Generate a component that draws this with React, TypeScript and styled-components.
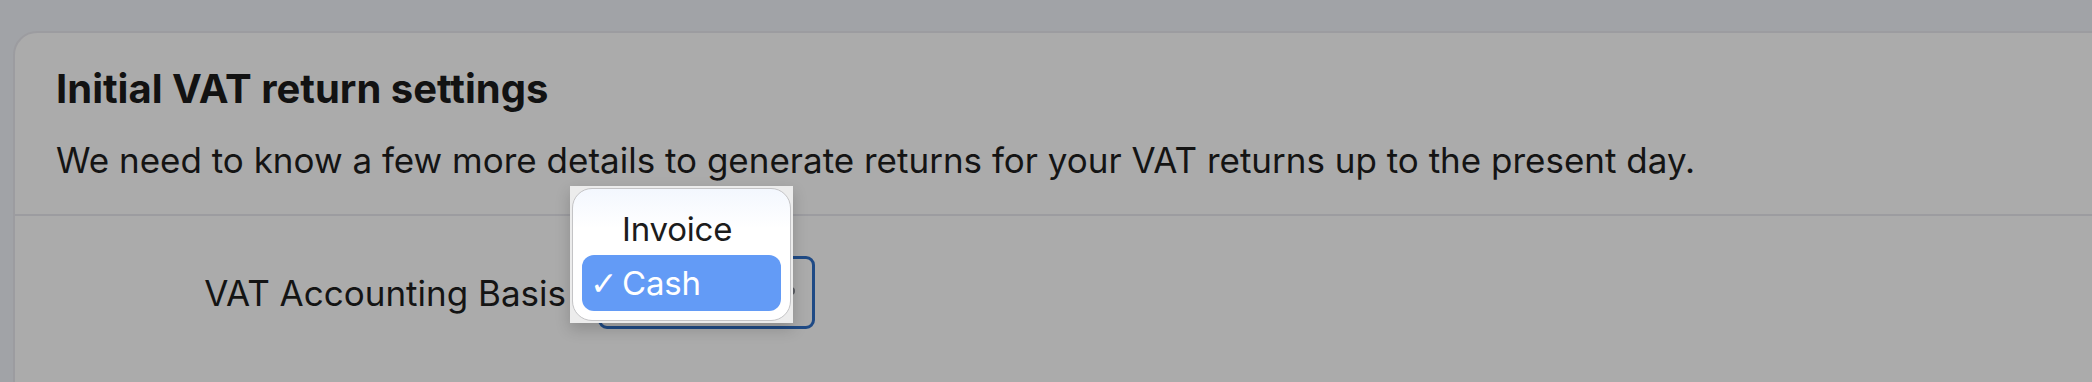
import React from "react";
import styled, { createGlobalStyle } from "styled-components";

const Global = createGlobalStyle`
  html, body { margin: 0; padding: 0; background: #a1a3a7; }
  body { font-family: Inter, "Noto Sans", sans-serif; color: #141414; }
`;

const Page = styled.div`
  height: 382px;
  overflow: hidden;
  padding: 31px 0 0 13px;
  box-sizing: border-box;
`;

const Card = styled.section`
  width: calc(100% + 40px);
  height: 420px;
  box-sizing: border-box;
  background: #ababab;
  border: 2px solid #9c9ca0;
  border-radius: 24px;
`;

const Header = styled.header`
  padding: 28px 0 0 41px;
  height: 183px;
  box-sizing: border-box;
  border-bottom: 2px solid #9c9ca0;
`;

const Title = styled.h2`
  margin: 0;
  font-size: 40px;
  line-height: 56px;
  font-weight: 700;
  color: #121212;
`;

const Subtitle = styled.p`
  margin: 21px 0 0;
  font-size: 35px;
  line-height: 44px;
  color: #141414;
`;

const Row = styled.div`
  display: grid;
  grid-template-columns: 551px 217px;
  column-gap: 32px;
  align-items: center;
  padding-top: 40px;
`;

const Label = styled.label`
  text-align: right;
  font-size: 35px;
  line-height: 44px;
`;

const SelectBox = styled.div`
  position: relative;
  height: 73px;
  box-sizing: border-box;
  border: 3px solid #1f4a85;
  border-radius: 9px;
`;

const Arrow = styled.span`
  position: absolute;
  right: 17px;
  top: 28px;
  width: 8px;
  height: 8px;
  border-radius: 50%;
  background: #5a5c62;
`;

const Backdrop = styled.div`
  position: absolute;
  left: -31px;
  top: -73px;
  width: 223px;
  height: 137px;
  background: #ececec;
  padding: 2px;
  box-sizing: border-box;
  box-shadow: 0 6px 14px rgba(0, 0, 0, 0.18);
`;

const Menu = styled.ul`
  margin: 0;
  padding: 0 9px 9px;
  list-style: none;
  height: 133px;
  box-sizing: border-box;
  background: linear-gradient(180deg, #f3f7fe 0%, #ffffff 30%, #ffffff 100%);
  border: 1px solid #c4c4c6;
  border-radius: 20px;
  display: flex;
  flex-direction: column;
  justify-content: flex-end;
  gap: 0;
`;

const Item = styled.li<{ $selected?: boolean }>`
  height: 56px;
  box-sizing: border-box;
  padding-top: ${(p) => (p.$selected ? "0" : "4px")};
  display: flex;
  align-items: center;
  border-radius: 12px;
  padding-left: 8px;
  font-size: 33px;
  letter-spacing: -0.2px;
  background: ${(p) => (p.$selected ? "#639bf6" : "transparent")};
  color: ${(p) => (p.$selected ? "#ffffff" : "#1c1c1c")};
`;

const Check = styled.span<{ $visible?: boolean }>`
  width: 32px;
  font-family: "DejaVu Sans", sans-serif;
  font-size: 33px;
  visibility: ${(p) => (p.$visible ? "visible" : "hidden")};
`;

export default function App() {
  return (
    <>
      <Global />
      <Page>
        <Card>
          <Header>
            <Title>Initial VAT return settings</Title>
            <Subtitle>
              We need to know a few more details to generate returns for your VAT returns up to the present day.
            </Subtitle>
          </Header>
          <Row>
            <Label>VAT Accounting Basis</Label>
            <SelectBox>
              <Arrow />
              <Backdrop>
                <Menu>
                  <Item>
                    <Check>✓</Check>Invoice
                  </Item>
                  <Item $selected>
                    <Check $visible>✓</Check>Cash
                  </Item>
                </Menu>
              </Backdrop>
            </SelectBox>
          </Row>
        </Card>
      </Page>
    </>
  );
}
